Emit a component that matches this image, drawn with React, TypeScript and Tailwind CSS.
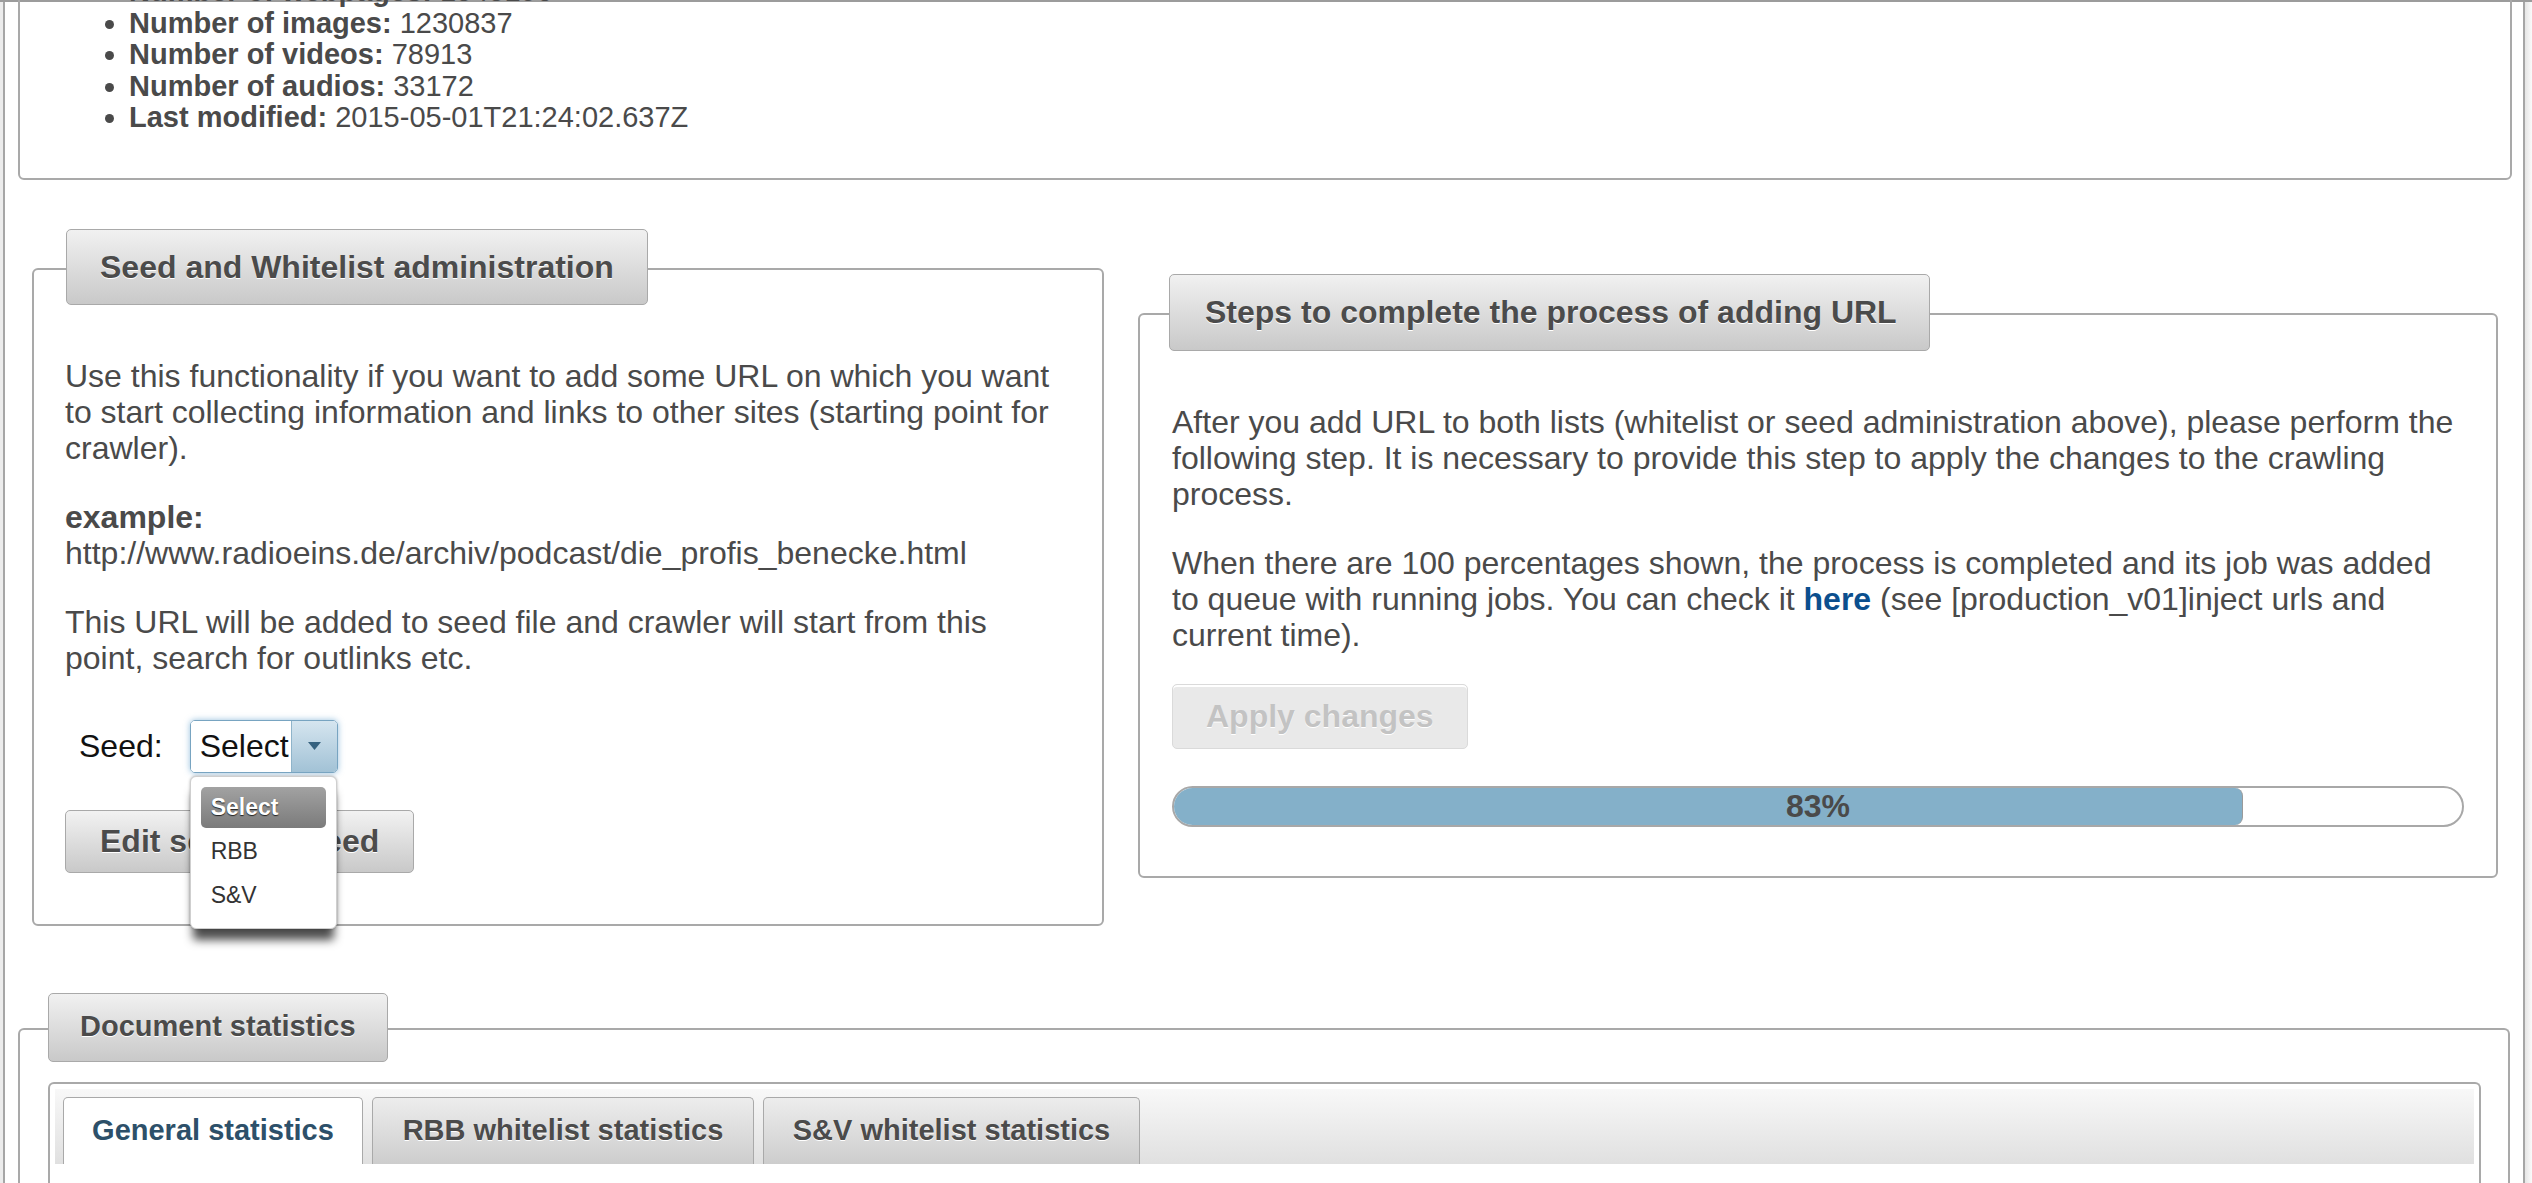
import React from "react";

type TabProps = {
  children: React.ReactNode;
  className?: string;
};

// grey gradient "legend" tab sitting on a panel's top border
function LegendTab({ children, className }: TabProps) {
  return (
    <div
      className={`flex items-center self-start whitespace-nowrap rounded-[5px] border border-[#a9a9a9] bg-linear-to-b from-[#f1f1f1] to-[#c9c9c9] font-bold text-[#4b4b4b] [text-shadow:0_1px_0_#fff] ${className}`}
    >
      {children}
    </div>
  );
}

export default function App() {
  return (
    <div className="h-[1183px] w-[2532px] overflow-hidden bg-white font-['Liberation_Sans',Arial,sans-serif] text-[#4a4a4a]">
      <div className="flex h-full border-t-2 border-[#9c9c9c]">
        <div className="w-[3px] shrink-0 bg-[#ececec]" />
        <main className="flex min-w-0 flex-1 flex-col border-x-2 border-[#a6a6a6]">
          {/* summary box, scrolled partly out of view */}
          <section className="-mt-[62px] ml-[13px] mr-[11px] rounded-[6px] border-2 border-[#a9a9a9] pt-[34px] pb-[44px]">
            <ul className="list-disc pl-[109px] text-[29px] leading-[31.5px]">
              <li>
                <b>Number of webpages:</b> 1545190
              </li>
              <li>
                <b>Number of images:</b> 1230837
              </li>
              <li>
                <b>Number of videos:</b> 78913
              </li>
              <li>
                <b>Number of audios:</b> 33172
              </li>
              <li>
                <b>Last modified:</b> 2015-05-01T21:24:02.637Z
              </li>
            </ul>
          </section>

          <div className="flex items-start">
            {/* Seed and Whitelist administration */}
            <section className="ml-[27px] mt-[88px] flex w-[1072px] flex-col rounded-[6px] border-2 border-[#a9a9a9] pb-[51px]">
              <LegendTab className="-mt-[41px] ml-[32px] h-[76px] px-[33px] text-[32px]">
                Seed and Whitelist administration
              </LegendTab>
              <div className="mt-[53px] px-[31px] text-[32px] leading-[36px]">
                <p className="mb-[33px]">
                  Use this functionality if you want to add some URL on which you want
                  <br />
                  to start collecting information and links to other sites (starting point for
                  <br />
                  crawler).
                </p>
                <p className="mb-[33px]">
                  <b>example:</b>
                  <br />
                  http://www.radioeins.de/archiv/podcast/die_profis_benecke.html
                </p>
                <p>
                  This URL will be added to seed file and crawler will start from this
                  <br />
                  point, search for outlinks etc.
                </p>

                <div className="ml-[14px] mt-[44px] flex items-center">
                  <span className="text-[#111]">Seed:</span>
                  <div className="relative ml-[27px]">
                    <div className="flex h-[53px] w-[148px] overflow-hidden rounded-[5px] border border-[#78a4c1] shadow-[0_0_6px_rgba(82,150,200,0.6)]">
                      <span className="flex flex-1 items-center overflow-hidden whitespace-nowrap bg-white pl-[9px] text-[32px] text-[#111]">
                        Select
                      </span>
                      <span className="flex w-[46px] items-center justify-center border-l border-[#8fb4ca] bg-linear-to-b from-[#d5e5ef] to-[#a2c2d6]">
                        <svg width="13" height="8" viewBox="0 0 13 8">
                          <path d="M0 0h13L6.5 8z" fill="#36627f" />
                        </svg>
                      </span>
                    </div>

                    {/* open option list */}
                    <div className="absolute left-0 top-[56px] z-10 w-[147px] rounded-[6px] border border-[#cfcfcf] bg-white px-[10px] pt-[10px] pb-[12px] text-[23px] leading-none text-[#333] shadow-[0_14px_10px_-3px_rgba(0,0,0,0.7),0_0_3px_rgba(0,0,0,0.3)]">
                      <div className="flex h-[41px] items-center rounded-[5px] bg-linear-to-b from-[#a2a2a2] to-[#7b7b7b] pl-[10px] font-semibold text-white [text-shadow:0_1px_1px_#222]">
                        Select
                      </div>
                      <div className="mt-[3px] flex h-[41px] items-center pl-[10px]">RBB</div>
                      <div className="mt-[3px] flex h-[41px] items-center pl-[10px]">S&amp;V</div>
                    </div>
                  </div>
                </div>

                <div className="mt-[37px] flex">
                  <button
                    type="button"
                    className="flex h-[63px] items-center rounded-[5px] border border-[#a9a9a9] bg-linear-to-b from-[#f2f2f2] to-[#c9c9c9] px-[34px] text-[32px] font-bold text-[#4b4b4b] [text-shadow:0_1px_0_#fff]"
                  >
                    Edit selected seed
                  </button>
                </div>
              </div>
            </section>

            {/* Steps to complete */}
            <section className="ml-[34px] mt-[133px] flex w-[1360px] flex-col rounded-[6px] border-2 border-[#a9a9a9] pb-[49px]">
              <LegendTab className="-mt-[41px] ml-[29px] h-[77px] pl-[35px] pr-[32px] text-[32px]">
                Steps to complete the process of adding URL
              </LegendTab>
              <div className="mt-[53px] px-[32px] text-[32px] leading-[36px]">
                <p className="mb-[33px]">
                  After you add URL to both lists (whitelist or seed administration above), please perform the
                  <br />
                  following step. It is necessary to provide this step to apply the changes to the crawling
                  <br />
                  process.
                </p>
                <p>
                  When there are 100 percentages shown, the process is completed and its job was added
                  <br />
                  to queue with running jobs. You can check it{" "}
                  <a href="#" className="font-bold text-[#0b4f8e]">
                    here
                  </a>{" "}
                  (see [production_v01]inject urls and
                  <br />
                  current time).
                </p>

                <div className="mt-[31px] flex">
                  <button
                    type="button"
                    disabled
                    className="flex h-[65px] items-center rounded-[5px] border border-[#dadada] bg-[#e9e9e9] px-[33px] text-[32px] font-bold text-[#c3c3c3] shadow-[inset_0_2px_0_#fff] [text-shadow:0_1px_0_#fff]"
                  >
                    Apply changes
                  </button>
                </div>

                <div className="relative mt-[37px] h-[41px] overflow-hidden rounded-full border-2 border-[#a8a8a8] bg-white">
                  <div
                    className="h-full rounded-r-[8px] border-r border-[#9a9a9a] bg-[#84b0c9]"
                    style={{ width: "83%" }}
                  />
                  <span className="absolute inset-0 flex items-center justify-center text-[32px] font-bold text-[#4a4a4a]">
                    83%
                  </span>
                </div>
              </div>
            </section>
          </div>

          {/* Document statistics */}
          <section className="mx-[13px] mt-[102px] flex flex-col rounded-t-[6px] border-2 border-b-0 border-[#a9a9a9]">
            <LegendTab className="-mt-[37px] ml-[28px] h-[69px] px-[31px] text-[29px]">
              Document statistics
            </LegendTab>
            <div className="ml-[28px] mr-[27px] mt-[20px] h-[300px] rounded-t-[6px] border-2 border-b-0 border-[#a9a9a9] p-[5px]">
              <div className="flex h-[75px] items-end gap-[9px] bg-linear-to-b from-[#f8f8f8] to-[#e0e0e0] pl-[8px] text-[29px] font-bold">
                <div className="flex h-[67px] w-[300px] items-center justify-center rounded-t-[5px] border border-b-0 border-[#a9a9a9] bg-white text-[#2d5069]">
                  General statistics
                </div>
                <div className="flex h-[67px] w-[382px] items-center justify-center rounded-t-[5px] border border-b-0 border-[#a9a9a9] bg-linear-to-b from-[#ededed] to-[#cdcdcd] text-[#4b4b4b] [text-shadow:0_1px_0_#fff]">
                  RBB whitelist statistics
                </div>
                <div className="flex h-[67px] w-[377px] items-center justify-center rounded-t-[5px] border border-b-0 border-[#a9a9a9] bg-linear-to-b from-[#ededed] to-[#cdcdcd] text-[#4b4b4b] [text-shadow:0_1px_0_#fff]">
                  S&amp;V whitelist statistics
                </div>
              </div>
            </div>
          </section>
        </main>
        <div className="w-[7px] shrink-0 bg-linear-to-r from-[#e6e6e6] to-[#fbfbfb]" />
      </div>
    </div>
  );
}
